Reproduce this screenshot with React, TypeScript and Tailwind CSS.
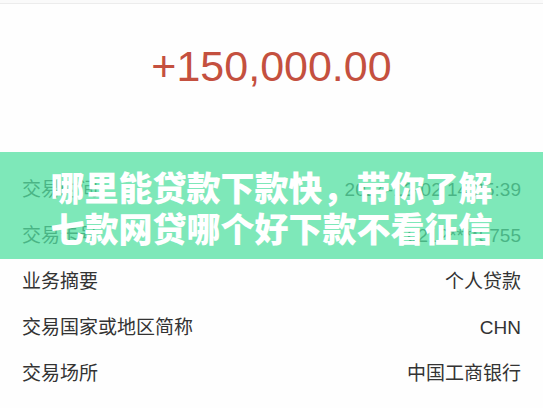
const rows = [
  { label: "交易时间", value: "2024-12-02 14:25:39" },
  { label: "交易卡号", value: "6212****5755" },
  { label: "业务摘要", value: "个人贷款" },
  { label: "交易国家或地区简称", value: "CHN" },
  { label: "交易场所", value: "中国工商银行" },
  { label: "交易金额", value: "150,000.00" },
]

const App = () => {
  return (
    <div
      className="relative w-[543px] h-[408px] overflow-hidden bg-[#fefefe]"
      style={{ fontFamily: '"Liberation Sans", "Noto Sans CJK SC", sans-serif' }}
    >
      <div className="h-[4px] border-b border-[#ececec] bg-[#fafafa]" />
      <div className="h-[125px] flex items-center justify-center">
        <span className="text-[43px] leading-none text-[#c4503f]">+150,000.00</span>
      </div>
      <div className="h-[38px]" />
      <div className="flex flex-col">
        {rows.map((row) => (
          <div key={row.label} className="h-[46px] px-[22px] flex items-center justify-between text-[19px] text-[#333]">
            <span>{row.label}</span>
            <span>{row.value}</span>
          </div>
        ))}
      </div>

      <div className="absolute left-0 right-0 top-[152px] h-[107px] bg-[#53e0a2]/75 flex flex-col items-center justify-center">
        <p
          className="text-white text-[34px] leading-[41px] font-black text-center pt-[3px]"
          style={{ fontFamily: '"Noto Sans CJK SC", sans-serif' }}
        >
          哪里能贷款下款快，带你了解
          <br />
          七款网贷哪个好下款不看征信
        </p>
      </div>
    </div>
  )
}

export default App
